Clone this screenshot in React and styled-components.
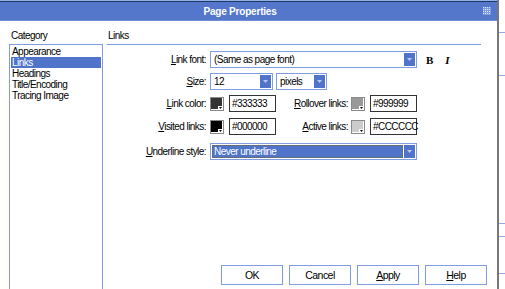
import React from "react";
import styled, { createGlobalStyle } from "styled-components";

const GlobalStyle = createGlobalStyle`
  html, body {
    margin: 0;
    padding: 0;
    background: #ffffff;
    overflow: hidden;
  }
  body {
    font-family: "Liberation Sans", Arial, sans-serif;
    font-size: 10px;
    letter-spacing: -0.55px;
    color: #000000;
  }
`;

const Screen = styled.div`
  width: 505px;
  height: 289px;
  display: flex;
  overflow: hidden;
  background: #ffffff;
`;

const Dialog = styled.div`
  width: 499px;
  box-sizing: border-box;
  border-right: 2px solid #777777;
  display: flex;
  flex-direction: column;
  background: #ffffff;
`;

const TopStrip = styled.div`
  height: 2px;
  background: linear-gradient(#8fb3e8 0 1px, #22365f 1px 2px);
`;

const TitleBar = styled.div`
  height: 18px;
  background: #5476cb;
  border-bottom: 1px solid #6f8fd8;
  display: flex;
  align-items: center;
`;

const Title = styled.div`
  flex: 1;
  text-align: center;
  color: #ffffff;
  font-weight: bold;
  letter-spacing: -0.2px;
  padding-left: 4px;
`;

const Grip = styled.svg`
  width: 8px;
  height: 8px;
  margin: 0 6px 0 7px;
`;

const Body = styled.div`
  flex: 1;
  display: flex;
  gap: 4px;
  padding: 9px 0 0 9px;
  overflow: hidden;
`;

const LeftColumn = styled.div`
  width: 94px;
  display: flex;
  flex-direction: column;
`;

const SectionLabel = styled.div`
  height: 12px;
  line-height: 12px;
  padding-left: 2px;
`;

const ListBox = styled.div`
  flex: 1;
  margin: 2px 0 -6px;
  border: 1px solid #7f9de0;
  padding: 1px;
`;

const ListItem = styled.div`
  height: 11px;
  line-height: 11px;
  padding-left: 1px;
  background: ${(p) => (p.$selected ? "#4f74c9" : "transparent")};
  color: ${(p) => (p.$selected ? "#ffffff" : "#000000")};
`;

const RightColumn = styled.div`
  flex: 1;
  display: flex;
  flex-direction: column;
`;

const PanelHeader = styled.div`
  height: 12px;
  line-height: 12px;
  padding: 0 0 2px 1px;
  margin-right: 16px;
  border-bottom: 1px solid #7f9de0;
`;

const Form = styled.div`
  display: flex;
  flex-direction: column;
  margin-top: 6px;
`;

const Row = styled.div`
  display: flex;
  align-items: center;
  height: 17px;
  margin-top: ${(p) => p.$top || 0}px;
`;

const FieldLabel = styled.div`
  width: ${(p) => p.$width}px;
  text-align: right;
  margin-right: ${(p) => p.$gap}px;
  white-space: nowrap;
  flex-shrink: 0;
`;

const Key = styled.span`
  text-decoration: underline;
`;

const Select = styled.div`
  width: ${(p) => p.$width}px;
  height: 17px;
  box-sizing: border-box;
  border: 1px solid #7f9de0;
  padding: 1px;
  display: flex;
  margin-left: ${(p) => p.$left || 0}px;
`;

const SelectValue = styled.div`
  flex: 1;
  line-height: 13px;
  padding-left: 2px;
  white-space: nowrap;
  overflow: hidden;
  box-sizing: border-box;
  background: ${(p) => (p.$active ? "#4f74c9" : "transparent")};
  color: ${(p) => (p.$active ? "#ffffff" : "#000000")};
  outline: ${(p) => (p.$active ? "1px dotted #7a6a20" : "none")};
  outline-offset: -1px;
`;

const DropButton = styled.div`
  width: 11px;
  height: 13px;
  margin-left: 1px;
  background: #4f74c9;
  display: flex;
  align-items: center;
  justify-content: center;
`;

const StyleButton = styled.div`
  font-family: "Liberation Serif", "Times New Roman", serif;
  font-weight: bold;
  font-style: ${(p) => (p.$italic ? "italic" : "normal")};
  font-size: 11px;
  letter-spacing: 0;
  margin-left: ${(p) => p.$left}px;
`;

const HexInput = styled.div`
  width: 47px;
  height: 17px;
  box-sizing: border-box;
  border: 1px solid #333333;
  line-height: 15px;
  padding-left: 2px;
  margin-left: 5px;
  flex-shrink: 0;
`;

const SwatchBox = styled.svg`
  width: 14px;
  height: 14px;
  flex-shrink: 0;
`;

const ButtonRow = styled.div`
  margin-top: auto;
  margin-bottom: 4px;
  padding-right: 10px;
  display: flex;
  justify-content: flex-end;
  gap: 6px;
`;

const DialogButton = styled.div`
  width: 62px;
  height: 20px;
  box-sizing: border-box;
  border: 1px solid #7f9de0;
  background: #ffffff;
  line-height: 18px;
  text-align: center;
  font-size: 10.5px;
`;

const Outside = styled.div`
  flex: 1;
  display: flex;
  flex-direction: column;
  background: #ffffff;
`;

const OutsideLine = styled.div`
  height: 1px;
  background: #8fa9e4;
  margin-top: ${(p) => p.$top}px;
`;

function DownArrow() {
  return (
    <svg width="5" height="3" viewBox="0 0 5 3">
      <path d="M0 0h5L2.5 3z" fill="#b9c9f0" />
    </svg>
  );
}

function Dropdown({ width, value, active, left }) {
  return (
    <Select $width={width} $left={left}>
      <SelectValue $active={active}>{value}</SelectValue>
      <DropButton>
        <DownArrow />
      </DropButton>
    </Select>
  );
}

function Swatch({ color }) {
  return (
    <SwatchBox viewBox="0 0 14 14">
      <rect x="0.5" y="0.5" width="13" height="13" fill="#ffffff" stroke="#8a8a8a" />
      <rect x="1" y="1" width="11" height="11" fill={color} />
      <rect x="8" y="9" width="5" height="4" fill="#ffffff" />
      <path d="M9 10h3l-1.5 2z" fill="#000000" />
    </SwatchBox>
  );
}

function ColorField({ label, keyChar, color, hex, labelWidth, labelGap }) {
  return (
    <>
      <FieldLabel $width={labelWidth} $gap={labelGap}>
        <Key>{keyChar}</Key>
        {label}
      </FieldLabel>
      <Swatch color={color} />
      <HexInput>{hex}</HexInput>
    </>
  );
}

const categories = ["Appearance", "Links", "Headings", "Title/Encoding", "Tracing Image"];

export default function App() {
  return (
    <>
      <GlobalStyle />
      <Screen>
        <Dialog>
          <TopStrip />
          <TitleBar>
            <Title>Page Properties</Title>
            <Grip viewBox="0 0 8 8">
              <rect width="8" height="8" fill="#7f9be0" />
              {[0, 2, 4, 6].map((x) =>
                [0, 2, 4, 6].map((y) => (
                  <rect key={`${x}-${y}`} x={x} y={y} width="1" height="1" fill="#dfe7fa" />
                ))
              )}
            </Grip>
          </TitleBar>
          <Body>
            <LeftColumn>
              <SectionLabel>Category</SectionLabel>
              <ListBox>
                {categories.map((c) => (
                  <ListItem key={c} $selected={c === "Links"}>
                    {c}
                  </ListItem>
                ))}
              </ListBox>
            </LeftColumn>
            <RightColumn>
              <PanelHeader>Links</PanelHeader>
              <Form>
                <Row>
                  <FieldLabel $width={99} $gap={4}>
                    <Key>L</Key>ink font:
                  </FieldLabel>
                  <Dropdown width={207} value="(Same as page font)" />
                  <StyleButton $left={9}>B</StyleButton>
                  <StyleButton $left={12} $italic>
                    I
                  </StyleButton>
                </Row>
                <Row $top={5}>
                  <FieldLabel $width={99} $gap={4}>
                    <Key>S</Key>ize:
                  </FieldLabel>
                  <Dropdown width={63} value="12" />
                  <Dropdown width={51} value="pixels" left={3} />
                </Row>
                <Row $top={5}>
                  <ColorField
                    labelWidth={99}
                    labelGap={4}
                    keyChar="L"
                    label="ink color:"
                    color="#333333"
                    hex="#333333"
                  />
                  <ColorField
                    labelWidth={72}
                    labelGap={3}
                    keyChar="R"
                    label="ollover links:"
                    color="#999999"
                    hex="#999999"
                  />
                </Row>
                <Row $top={6}>
                  <ColorField
                    labelWidth={99}
                    labelGap={4}
                    keyChar="V"
                    label="isited links:"
                    color="#000000"
                    hex="#000000"
                  />
                  <ColorField
                    labelWidth={72}
                    labelGap={3}
                    keyChar="A"
                    label="ctive links:"
                    color="#cccccc"
                    hex="#CCCCCC"
                  />
                </Row>
                <Row $top={8}>
                  <FieldLabel $width={99} $gap={4}>
                    <Key>U</Key>nderline style:
                  </FieldLabel>
                  <Dropdown width={207} value="Never underline" active />
                </Row>
              </Form>
              <ButtonRow>
                <DialogButton>OK</DialogButton>
                <DialogButton>Cancel</DialogButton>
                <DialogButton>
                  <Key>A</Key>pply
                </DialogButton>
                <DialogButton>
                  <Key>H</Key>elp
                </DialogButton>
              </ButtonRow>
            </RightColumn>
          </Body>
        </Dialog>
        <Outside>
          <OutsideLine $top={32} />
          <OutsideLine $top={42} />
          <OutsideLine $top={147} />
          <OutsideLine $top={12} />
          <OutsideLine $top={36} />
        </Outside>
      </Screen>
    </>
  );
}
